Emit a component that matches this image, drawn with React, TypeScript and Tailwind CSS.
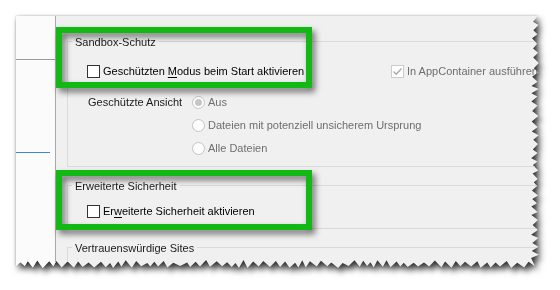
import React from 'react';

const W = 524;
const H = 253;

// jagged "torn paper" outline for the right and bottom edges
function tornClip(): string {
  let seed = 11;
  const rnd = () => {
    seed = (seed * 9301 + 49297) % 233280;
    return seed / 233280;
  };
  const pts: string[] = ['0px 0px'];
  let y = 0;
  let out = true;
  while (y < H - 6) {
    const x = out ? W - 1 - rnd() * 2 : W - 6 - rnd() * 3;
    pts.push(`${x.toFixed(1)}px ${y.toFixed(1)}px`);
    y += 3 + rnd() * 3;
    out = !out;
  }
  let x = W - 5;
  out = true;
  while (x > 0) {
    const yy = out ? H - 1 - rnd() * 2 : H - 6 - rnd() * 3;
    pts.push(`${x.toFixed(1)}px ${yy.toFixed(1)}px`);
    x -= 3 + rnd() * 4;
    out = !out;
  }
  pts.push(`0px ${H - 3}px`);
  return `polygon(${pts.join(',')})`;
}

const CheckBox: React.FC<{ checked?: boolean; disabled?: boolean }> = ({ checked, disabled }) => (
  <span
    className={`w-[13px] h-[13px] shrink-0 border bg-white flex items-center justify-center ${
      disabled ? 'border-[#cccccc]' : 'border-[#333333]'
    }`}
  >
    {checked && (
      <svg width="11" height="11" viewBox="0 0 11 11">
        <path d="M1.5 5.5 L4.2 8.2 L9.5 2.5" fill="none" stroke="#a8a8a8" strokeWidth="1.3" />
      </svg>
    )}
  </span>
);

const Radio: React.FC<{ checked?: boolean }> = ({ checked }) => (
  <span className="w-[13px] h-[13px] shrink-0 rounded-full border border-[#c2c2c2] bg-[#fdfdfd] flex items-center justify-center">
    {checked && <span className="w-[7px] h-[7px] rounded-full bg-[#c6c6c6]" />}
  </span>
);

const Header: React.FC<{ children: React.ReactNode }> = ({ children }) => (
  <div className="-mt-[8px] ml-[4px] px-[3px] w-fit bg-[#f0f0f0] leading-[16px] text-[#1a1a1a]">{children}</div>
);

const Callout: React.FC<{ className: string }> = ({ className }) => (
  <div
    className={`absolute left-[40px] w-[256px] border-[6px] border-[#14b814] [filter:drop-shadow(3px_4px_3px_rgba(0,0,0,0.55))] ${className}`}
  />
);

export default function App() {
  return (
    <div className="w-[560px] h-[290px] bg-white pl-[16px] pt-[16px] overflow-hidden font-['Liberation_Sans',Arial,sans-serif] text-[11px]">
      <div className="w-fit [filter:drop-shadow(0_0_1px_rgba(0,0,0,0.25))_drop-shadow(3px_4px_3px_rgba(0,0,0,0.8))]">
        <div className="relative flex w-[524px] h-[253px] bg-[#f0f0f0]" style={{ clipPath: tornClip() }}>
          {/* sidebar */}
          <div className="w-[40px] shrink-0 bg-[#fbfbfb] border-r border-[#a9a9a9]">
            <div className="h-[44px] border-b border-[#9a9a9a]" />
            <div className="mt-[92px] w-[34px] border-b border-[#3f86d4]" />
          </div>

          {/* settings */}
          <div className="flex-1 pt-[25px] pl-[11px] whitespace-nowrap">
            <div className="border-l border-t border-b border-[#dadada] pb-[6px]">
              <Header>Sandbox-Schutz</Header>
              <div className="mt-[13px] pl-[19px] flex items-center h-[16px]">
                <div className="w-[304px] flex items-center gap-[3px] text-black">
                  <CheckBox />
                  <span>
                    Geschützten <span className="underline underline-offset-2">M</span>odus beim Start aktivieren
                  </span>
                </div>
                <div className="flex items-center gap-[3px] text-[#6e6e6e]">
                  <CheckBox checked disabled />
                  <span>In AppContainer ausführen</span>
                </div>
              </div>
              <div className="mt-[12px] pl-[20px] flex">
                <div className="w-[104px] h-[23px] flex items-center text-[#1a1a1a]">Geschützte Ansicht</div>
                <div className="flex flex-col text-[#6e6e6e]">
                  {[
                    { label: 'Aus', checked: true },
                    { label: 'Dateien mit potenziell unsicherem Ursprung' },
                    { label: 'Alle Dateien' },
                  ].map((r) => (
                    <div key={r.label} className="h-[23px] flex items-center gap-[3px]">
                      <Radio checked={r.checked} />
                      <span>{r.label}</span>
                    </div>
                  ))}
                </div>
              </div>
            </div>

            <div className="mt-[18px] border-l border-t border-b border-[#dadada] pb-[9px]">
              <Header>Erweiterte Sicherheit</Header>
              <div className="mt-[9px] pl-[19px] flex items-center gap-[3px] h-[16px] text-black">
                <CheckBox />
                <span>
                  Er<span className="underline underline-offset-2">w</span>eiterte Sicherheit aktivieren
                </span>
              </div>
            </div>

            <div className="mt-[18px] border-l border-t border-[#dadada] h-[40px]">
              <Header>Vertrauenswürdige Sites</Header>
            </div>
          </div>

          <Callout className="top-[11px] h-[61px]" />
          <Callout className="top-[154px] h-[60px]" />
        </div>
      </div>
    </div>
  );
}
